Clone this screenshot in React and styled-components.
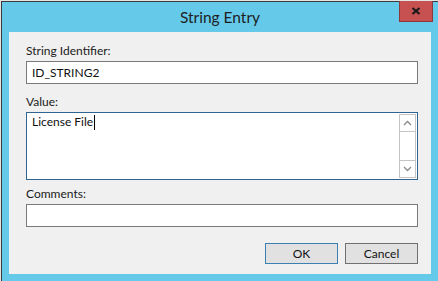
import React from 'react';
import styled, { createGlobalStyle } from 'styled-components';

const GlobalStyle = createGlobalStyle`
  html, body {
    margin: 0;
    padding: 0;
    background: #e8e8e8;
  }
  body {
    width: 438px;
    height: 281px;
    overflow: hidden;
    font-family: Lato, "Noto Sans", sans-serif;
  }
`;

const Desktop = styled.div`
  width: 438px;
  height: 281px;
  padding: 1px 0 0 1px;
  box-sizing: border-box;
  background: #e4e4e4;
`;

const Window = styled.div`
  position: relative;
  height: 100%;
  box-sizing: border-box;
  border-top: 1px solid #3a3a3a;
  border-left: 1px solid #3a3a3a;
  background: #65c9ea;
  padding: 0 7px 7px 7px;
  display: flex;
  flex-direction: column;
`;

const TitleBar = styled.div`
  height: 30px;
  display: flex;
  align-items: center;
  justify-content: center;
  font-size: 15.5px;
  color: #1e1e1e;
  padding-bottom: 1px;
  box-sizing: border-box;
`;

const CloseButton = styled.div`
  position: absolute;
  top: -1px;
  right: 5px;
  width: 34px;
  height: 21px;
  box-sizing: border-box;
  background: #c75050;
  border: 1px solid #8c3838;
  border-top: none;
  display: flex;
  align-items: center;
  justify-content: center;
`;

const Client = styled.div`
  flex: 1;
  background: #f0f0f0;
  padding: 11px 13px 10px 17px;
  display: flex;
  flex-direction: column;
`;

const Field = styled.div`
  display: flex;
  flex-direction: column;
  margin-top: ${p => p.$gap || 0}px;
`;

const Label = styled.div`
  font-size: 12px;
  line-height: 16px;
  color: #1a1a1a;
  margin-bottom: 2px;
`;

const TextBox = styled.input`
  height: 23px;
  box-sizing: border-box;
  border: 1px solid #7a7a7a;
  background: #fff;
  padding: 0 5px;
  margin: 0;
  font-family: inherit;
  font-size: 12px;
  color: #111;
  outline: none;
`;

const MultiBox = styled.div`
  height: 68px;
  box-sizing: border-box;
  border: 1px solid #2f6593;
  background: #fff;
  display: flex;
  padding: 1px 1px 1px 5px;
`;

const MultiText = styled.div`
  flex: 1;
  font-size: 12px;
  line-height: 16px;
  color: #111;
`;

const Caret = styled.span`
  display: inline-block;
  width: 1px;
  height: 15px;
  background: #000;
  vertical-align: -4px;
  margin-left: 1px;
`;

const ScrollBar = styled.div`
  width: 17px;
  box-sizing: border-box;
  border: 1px solid #c4c4c4;
  display: flex;
  flex-direction: column;
`;

const ScrollArrow = styled.div`
  height: 16px;
  display: flex;
  align-items: center;
  justify-content: center;
  border-bottom: ${p => (p.$top ? '1px solid #c4c4c4' : 'none')};
  border-top: ${p => (p.$top ? 'none' : '1px solid #c4c4c4')};
`;

const ScrollTrack = styled.div`
  flex: 1;
`;

const ButtonRow = styled.div`
  margin-top: auto;
  display: flex;
  justify-content: flex-end;
  gap: 7px;
`;

const Button = styled.div`
  width: 73px;
  height: 21px;
  box-sizing: border-box;
  border: 1px solid ${p => (p.$default ? '#3c7fb1' : '#707070')};
  background: #e1e1e1;
  display: flex;
  align-items: center;
  justify-content: center;
  font-size: 12px;
  color: #111;
`;

const Chevron = ({ up }) => (
  <svg width="9" height="6" viewBox="0 0 9 6">
    <path
      d={up ? 'M1 5 L4.5 1.5 L8 5' : 'M1 1 L4.5 4.5 L8 1'}
      fill="none"
      stroke="#8a8a8a"
      strokeWidth="1.3"
    />
  </svg>
);

const App = () => (
  <>
    <GlobalStyle />
    <Desktop>
      <Window>
        <TitleBar>String Entry</TitleBar>
        <CloseButton>
          <svg width="10" height="8" viewBox="0 0 10 8">
            <path d="M1.5 1 L8.5 7 M8.5 1 L1.5 7" stroke="#1a1a1a" strokeWidth="2.2" />
          </svg>
        </CloseButton>
        <Client>
          <Field>
            <Label>String Identifier:</Label>
            <TextBox readOnly defaultValue="ID_STRING2" />
          </Field>
          <Field $gap={10}>
            <Label>Value:</Label>
            <MultiBox>
              <MultiText>
                License File<Caret />
              </MultiText>
              <ScrollBar>
                <ScrollArrow $top>
                  <Chevron up />
                </ScrollArrow>
                <ScrollTrack />
                <ScrollArrow>
                  <Chevron />
                </ScrollArrow>
              </ScrollBar>
            </MultiBox>
          </Field>
          <Field $gap={6}>
            <Label>Comments:</Label>
            <TextBox readOnly defaultValue="" />
          </Field>
          <ButtonRow>
            <Button $default>OK</Button>
            <Button>Cancel</Button>
          </ButtonRow>
        </Client>
      </Window>
    </Desktop>
  </>
);

export default App;
